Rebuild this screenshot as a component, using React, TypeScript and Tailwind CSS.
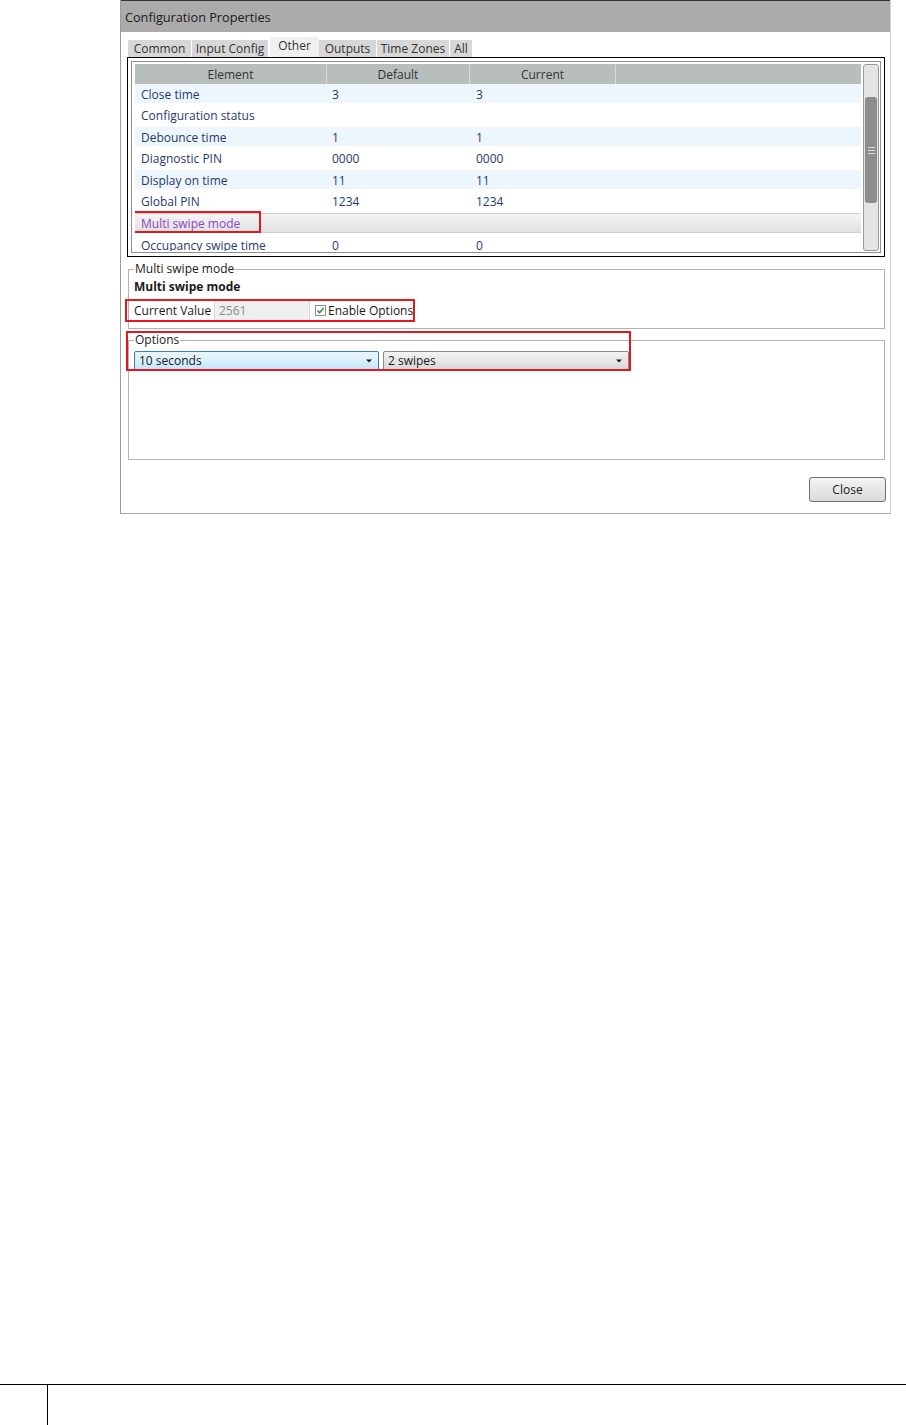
import React from 'react'

const tabs = [
  { label: 'Common', w: 'w-[63px]', ml: 'ml-[1px]' },
  { label: 'Input Config', w: 'w-[76px]', ml: 'ml-[1px]' },
  { label: 'Other', w: 'w-[49px]', ml: 'ml-[2px]', active: true },
  { label: 'Outputs', w: 'w-[57px]', ml: 'ml-0' },
  { label: 'Time Zones', w: 'w-[72px]', ml: 'ml-[1px]' },
  { label: 'All', w: 'w-[22px]', ml: 'ml-[1px]' },
]

const rows = [
  ['Close time', '3', '3'],
  ['Configuration status', '', ''],
  ['Debounce time', '1', '1'],
  ['Diagnostic PIN', '0000', '0000'],
  ['Display on time', '11', '11'],
  ['Global PIN', '1234', '1234'],
  ['Multi swipe mode', '', ''],
  ['Occupancy swipe time', '0', '0'],
]

function Arrow() {
  return (
    <svg width="6" height="4" viewBox="0 0 6 4">
      <path d="M0 0.5 L6 0.5 L3 3.5 Z" fill="#1a1a1a" />
    </svg>
  )
}

function Grid() {
  return (
    <div className="h-full border border-[#8f8f8f] pt-[2px] pl-[3px] pr-[1px] pb-[1px] flex">
      <div className="flex-1 overflow-hidden">
        <div className="h-[20px] bg-[#b8bebb] flex text-[#333] items-center pt-[1px]">
          <div className="w-[192px] h-full flex items-center justify-center border-r border-[#d6dad8]">Element</div>
          <div className="w-[143px] h-full flex items-center justify-center border-r border-[#d6dad8]">Default</div>
          <div className="w-[146px] h-full flex items-center justify-center border-r border-[#d6dad8]">Current</div>
          <div className="flex-1" />
        </div>
        {rows.map((r, i) => {
          const selected = i === 6
          const cls = selected
            ? 'h-[20px] bg-linear-to-b from-[#f4f4f4] to-[#e1e1e1] border-y border-[#cdcdcd] text-[#8b45c8] pt-[1px]'
            : i % 2 === 0
              ? 'h-[19px] bg-[#edf5fd] text-[#1f3b6b] pt-[3px]'
              : 'h-[24px] bg-white text-[#1f3b6b] pt-[1px]'
          return (
            <div key={r[0]} className={`relative flex items-center ${cls}`}>
              <div className="w-[192px] pl-[6px]">{r[0]}</div>
              <div className="w-[143px] pl-[5px]">{r[1]}</div>
              <div className="w-[146px] pl-[6px]">{r[2]}</div>
              {selected && (
                <div className="absolute left-[-5px] top-[-3px] w-[131px] h-[22px] border-2 border-[#e3191f]" />
              )}
            </div>
          )
        })}
      </div>
      <div className="ml-[2px] w-[16px] h-full rounded-[3px] border border-[#9a9a9a] bg-[#e4e4e4]">
        <div className="mt-[32px] mx-[1px] h-[106px] rounded-[3px] bg-[#8d8d8d] flex flex-col items-center justify-center gap-[2px]">
          <div className="w-[7px] h-px bg-[#dcdcdc]" />
          <div className="w-[7px] h-px bg-[#dcdcdc]" />
          <div className="w-[7px] h-px bg-[#dcdcdc]" />
        </div>
      </div>
    </div>
  )
}

export default function App() {
  return (
    <div className="w-[906px] h-[1425px] bg-white overflow-hidden font-['Open_Sans',sans-serif] text-[12px] text-[#1a1a1a]">
      <div className="ml-[120px] w-[771px] border-l border-[#9c9c9c] border-r border-r-[#d4d4d4] border-b border-b-[#a8a8a8]">
        <div className="h-[32px] border-t border-[#333] bg-[#ababab] pl-[4px] pt-[3px] flex items-center text-[12.7px]">
          Configuration Properties
        </div>
        <div className="pl-[6px] pr-[5px] pb-[11px]">
          <div className="mt-[5px] h-[20px] flex items-end">
            {tabs.map((t) => (
              <div
                key={t.label}
                className={`${t.w} ${t.ml} flex items-center justify-center text-[#333] whitespace-nowrap ${
                  t.active ? 'h-[20px] bg-[#f0f0f0] pb-[2px]' : 'h-[17px] bg-[#d7d7d7]'
                }`}
              >
                {t.label}
              </div>
            ))}
          </div>
          <div className="h-[200px] border border-black p-[3px]">
            <Grid />
          </div>

          <fieldset className="mt-[4px] ml-[1px] w-[757px] border border-[#b3b3b3] px-[5px] pb-[6px]">
            <legend className="px-[1px] leading-[16px]">Multi swipe mode</legend>
            <div className="mt-[2px] leading-[16px] font-bold">Multi swipe mode</div>
            <div className="-ml-[9px] mt-[4px] w-[290px] h-[23px] border-2 border-[#e3191f] flex items-stretch whitespace-nowrap">
              <div className="w-[87px] shrink-0 pl-[7px] flex items-center">Current Value</div>
              <div className="w-[96px] shrink-0 bg-[#efefef] border-x border-[#d9d9d9] pl-[4px] flex items-center text-[#8a8a8a]">
                2561
              </div>
              <div className="ml-[5px] shrink-0 self-center w-[11px] h-[11px] border border-[#8e8e8e] bg-white flex items-center justify-center">
                <svg width="9" height="9" viewBox="0 0 9 9">
                  <path d="M1.5 4.5 L3.6 6.8 L7.6 1.8" fill="none" stroke="#3d9a32" strokeWidth="1.6" />
                </svg>
              </div>
              <div className="ml-[2px] flex items-center">Enable Options</div>
            </div>
          </fieldset>

          <div className="relative mt-[3px] ml-[1px] w-[757px]">
            <fieldset className="w-full border border-[#b3b3b3] px-[5px] pt-[3px] pb-[88px]">
              <legend className="px-[1px] leading-[16px]">Options</legend>
              <div className="flex gap-[4px]">
                <div className="w-[245px] h-[20px] rounded-[2px] border border-[#3c7fb1] bg-linear-to-b from-[#eaf6fd] via-[#d9f0fc] to-[#bde5fc] pl-[4px] pr-[6px] flex items-center justify-between">
                  <span>10 seconds</span>
                  <Arrow />
                </div>
                <div className="w-[246px] h-[20px] rounded-[2px] border border-[#8a8a8a] bg-linear-to-b from-[#f3f3f3] via-[#e6e6e6] to-[#d4d4d4] pl-[4px] pr-[6px] flex items-center justify-between">
                  <span>2 swipes</span>
                  <Arrow />
                </div>
              </div>
            </fieldset>
            <div className="absolute left-[-2px] top-[-1px] w-[505px] h-[40px] border-2 border-[#e3191f]" />
          </div>

          <div className="mt-[17px] flex justify-end -mr-[1px]">
            <div className="w-[77px] h-[25px] rounded-[3px] border border-[#707070] bg-linear-to-b from-[#f4f4f4] to-[#dadada] flex items-center justify-center text-[#222]">
              Close
            </div>
          </div>
        </div>
      </div>

      <div className="mt-[870px] h-[41px] border-t border-black">
        <div className="w-[48px] h-full border-r border-black" />
      </div>
    </div>
  )
}
